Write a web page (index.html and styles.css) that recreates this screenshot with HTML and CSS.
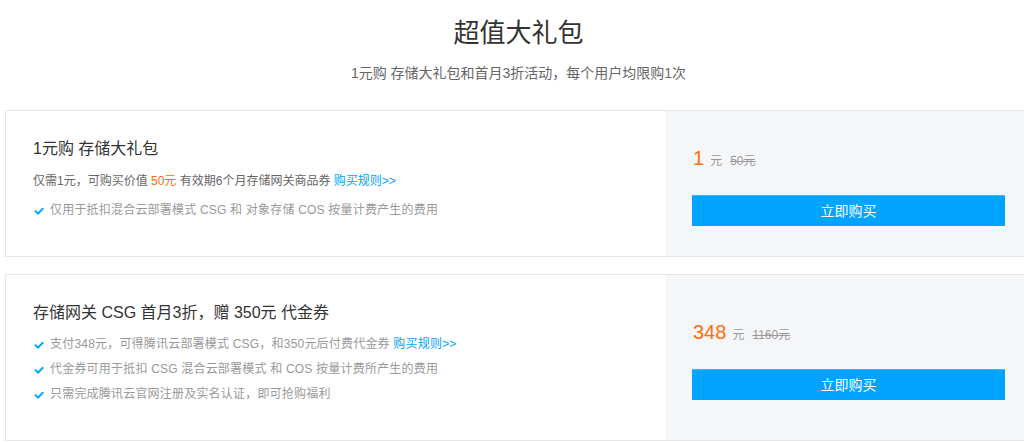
FILE: index.html
```html
<!DOCTYPE html>
<html>
    <head lang="zh-CN">
        <meta charset="UTF-8">
        <title>超值大礼包</title>
        <link rel="stylesheet" href="styles.css">
    </head>
    <body>
        <div class="page">
            <div class="head">
                <h1 class="head-title">超值大礼包</h1>
                <p class="head-sub">1元购 存储大礼包和首月3折活动，每个用户均限购1次</p>
            </div>

            <div class="card">
                <div class="info">
                    <h3 class="info-title">1元购 存储大礼包</h3>
                    <p class="info-desc">仅需1元，可购买价值 <span class="hot">50元</span> 有效期6个月存储网关商品券 <a class="rule" href="#">购买规则&gt;&gt;</a></p>
                    <ul class="info-list">
                        <li><svg class="tick" viewBox="0 0 10 8"><polyline points="1,3.6 4,6.6 9.2,1.2"/></svg>仅用于抵扣混合云部署模式 CSG 和 对象存储 COS 按量计费产生的费用</li>
                    </ul>
                </div>
                <div class="buy">
                    <div class="price"><span class="price-num">1</span><span class="price-unit">元</span><del class="price-old">50元</del></div>
                    <a class="btn" href="#">立即购买</a>
                </div>
            </div>

            <div class="card">
                <div class="info">
                    <h3 class="info-title">存储网关 CSG 首月3折，赠 350元 代金券</h3>
                    <ul class="info-list">
                        <li><svg class="tick" viewBox="0 0 10 8"><polyline points="1,3.6 4,6.6 9.2,1.2"/></svg>支付348元，可得腾讯云部署模式 CSG，和350元后付费代金券 <a class="rule" href="#">购买规则&gt;&gt;</a></li>
                        <li><svg class="tick" viewBox="0 0 10 8"><polyline points="1,3.6 4,6.6 9.2,1.2"/></svg>代金券可用于抵扣 CSG 混合云部署模式 和 COS 按量计费所产生的费用</li>
                        <li><svg class="tick" viewBox="0 0 10 8"><polyline points="1,3.6 4,6.6 9.2,1.2"/></svg>只需完成腾讯云官网注册及实名认证，即可抢购福利</li>
                    </ul>
                </div>
                <div class="buy">
                    <div class="price"><span class="price-num">348</span><span class="price-unit">元</span><del class="price-old">1160元</del></div>
                    <a class="btn" href="#">立即购买</a>
                </div>
            </div>
        </div>
    </body>
</html>
```

FILE: styles.css
```css
*{
    margin:0;
    padding:0;
    box-sizing:border-box;
}
ol,ul{
    list-style:none;
}
a{
    text-decoration:none;
}
body{
    background-color:#fff;
    font-family:"Liberation Sans","Noto Sans CJK SC",sans-serif;
    color:#333;
    overflow:hidden;
}
.page{
    width:1027px;
    margin-left:5px;
}
.head{
    text-align:center;
    padding-top:15px;
}
.head-title{
    font-size:26px;
    line-height:36px;
    font-weight:normal;
    color:#333;
}
.head-sub{
    margin-top:12px;
    font-size:14px;
    line-height:20px;
    color:#666;
}
.card{
    display:flex;
    margin-top:27px;
    border:1px solid #e6e6e6;
}
.card + .card{
    margin-top:17px;
}
.info{
    flex:1;
    padding:25px 27px 33px;
}
.info-title{
    font-size:16px;
    line-height:26px;
    font-weight:normal;
    color:#333;
}
.info-desc{
    margin-top:8px;
    font-size:12px;
    line-height:22px;
    color:#666;
}
.hot{
    color:#ff6d0a;
}
.rule{
    color:#00a4ff;
}
.info-list{
    margin-top:6px;
}
.info-list li{
    display:flex;
    align-items:center;
    font-size:12px;
    letter-spacing:0.2px;
    line-height:25px;
    color:#999;
    white-space:pre;
}
.tick{
    width:10px;
    height:8px;
    margin:0 6px 0 1px;
    flex-shrink:0;
}
.tick polyline{
    fill:none;
    stroke:#00a4ff;
    stroke-width:2;
}
.buy{
    width:365px;
    background-color:#f5f6f8;
    padding:0 26px;
    display:flex;
    flex-direction:column;
    justify-content:center;
}
.price{
    height:32px;
    display:flex;
    align-items:baseline;
    padding-left:1px;
    line-height:32px;
}
.price-num{
    font-size:20px;
    color:#ff6d0a;
}
.price-unit{
    font-size:12px;
    color:#999;
    margin-left:6px;
}
.price-old{
    font-size:12px;
    color:#999;
    margin-left:8px;
}
.btn{
    display:block;
    margin-top:21px;
    height:31px;
    line-height:31px;
    text-align:center;
    font-size:14px;
    color:#fff;
    background-color:#00a4ff;
    border-top:1px solid #33b6ff;
}
```
